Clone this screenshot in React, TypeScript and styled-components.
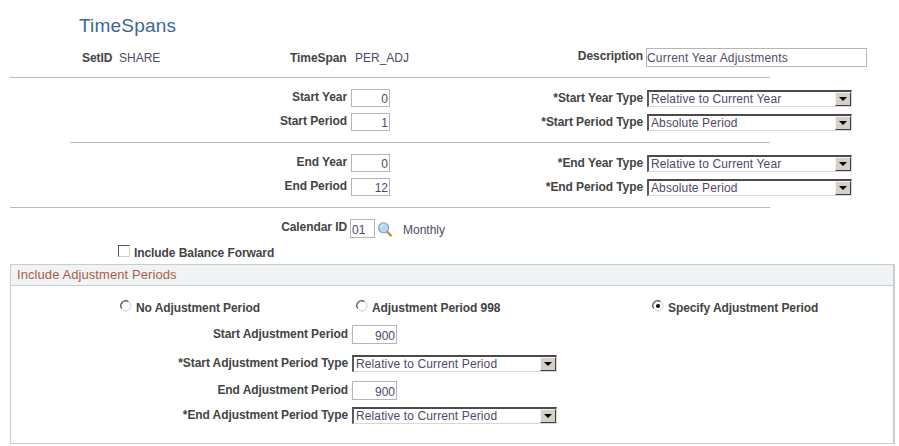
import React from 'react';
import styled, { createGlobalStyle } from 'styled-components';

const GlobalStyle = createGlobalStyle`
  html, body {
    margin: 0;
    padding: 0;
    background: #fff;
    font-family: 'Liberation Sans', Arial, sans-serif;
    font-size: 12px;
  }
`;

const Page = styled.div`
  width: 899px;
  height: 446px;
  overflow: hidden;
  position: relative;
`;

const Title = styled.h1`
  margin: 15px 0 0 79px;
  font-size: 19px;
  letter-spacing: 0.2px;
  line-height: 22px;
  font-weight: normal;
  color: #3d6797;
`;

const HeaderRow = styled.div`
  display: grid;
  grid-template-columns: 37px 171px 54px 216px 83px 224px;
  padding-left: 82px;
  height: 19px;
  margin-top: 11px;
  align-items: start;
`;

const Label = styled.label<{ $top?: number }>`
  display: block;
  font-weight: bold;
  color: #444;
  font-size: 12px;
  letter-spacing: -0.08px;
  line-height: 14px;
  white-space: nowrap;
  margin-top: ${(p) => p.$top ?? 0}px;
`;

const RightLabel = styled(Label)`
  text-align: right;
`;

const Value = styled.span<{ $left?: number }>`
  display: block;
  color: #4f4a68;
  font-size: 12px;
  line-height: 14px;
  white-space: nowrap;
  margin-top: 3px;
  padding-left: ${(p) => p.$left ?? 0}px;
`;

const Rule = styled.hr<{ $indent: number; $top?: number }>`
  border: 0;
  height: 1px;
  background: #b9b9b9;
  margin: ${(p) => p.$top ?? 10}px 129px 11px ${(p) => p.$indent}px;
`;

const FieldRow = styled.div`
  display: grid;
  grid-template-columns: 347px 43px 253px 1fr;
  height: 18px;
  align-items: start;
  & + & {
    margin-top: 6px;
  }
`;

const TextInput = styled.input<{ $width: number; $height?: number; $align?: string; $pad?: number; $spacing?: number }>`
  box-sizing: border-box;
  display: block;
  width: ${(p) => p.$width}px;
  height: ${(p) => p.$height ?? 18}px;
  padding: 2px 1px 0 ${(p) => p.$pad ?? 1}px;
  border: 1px solid #b5b5b5;
  font-family: inherit;
  font-size: 12px;
  letter-spacing: ${(p) => p.$spacing ?? 0}px;
  color: #4f4a68;
  text-align: ${(p) => p.$align ?? 'right'};
  outline: none;
`;

const DescriptionInput = styled(TextInput)`
  padding-top: 0;
`;

const InputCell = styled.div<{ $left: number; $top?: number }>`
  padding-left: ${(p) => p.$left}px;
  padding-top: ${(p) => p.$top ?? 0}px;
`;

const SelectBox = styled.div`
  box-sizing: border-box;
  display: flex;
  width: 205px;
  height: 17px;
  border-top: 2px solid #4a4a4a;
  border-left: 2px solid #5a5a5a;
  border-right: 1px solid #d8d6d0;
  border-bottom: 1px solid #d8d6d0;
  background: #fff;
`;

const SelectText = styled.span`
  flex: 1;
  padding-left: 2px;
  font-size: 12px;
  letter-spacing: 0.12px;
  line-height: 15px;
  color: #4f4a68;
  white-space: nowrap;
`;

const SelectButton = styled.span`
  box-sizing: border-box;
  width: 16px;
  height: 14px;
  background: #d4d0c8;
  border-top: 1px solid #f4f3f0;
  border-left: 1px solid #f4f3f0;
  border-right: 1px solid #404040;
  border-bottom: 1px solid #404040;
  display: flex;
  align-items: center;
  justify-content: center;
  &::after {
    content: '';
    border-left: 4px solid transparent;
    border-right: 4px solid transparent;
    border-top: 4px solid #000;
  }
`;

const CalendarRow = styled.div`
  display: flex;
  align-items: flex-start;
  height: 19px;
`;

const CalendarLabel = styled(RightLabel)`
  width: 347px;
`;

const SearchButton = styled.span`
  display: block;
  width: 14px;
  height: 15px;
  margin: 3px 0 0 3px;
`;

const CalendarValue = styled(Value)`
  margin: 4px 0 0 11px;
`;

const CheckRow = styled.div`
  display: flex;
  align-items: flex-start;
  height: 13px;
  margin: 7px 0 6px 118px;
`;

const CheckBox = styled.span`
  box-sizing: border-box;
  display: block;
  width: 12px;
  height: 12px;
  border-top: 1px solid #555;
  border-left: 1px solid #555;
  border-right: 1px solid #d4d0c8;
  border-bottom: 1px solid #d4d0c8;
  background: #fff;
`;

const CheckLabel = styled(Label)`
  margin: 1px 0 0 4px;
`;

const Section = styled.section`
  box-sizing: border-box;
  margin-left: 10px;
  width: 885px;
  height: 180px;
  border-left: 1px solid #c9ccd4;
  border-right: 2px solid #c9ccd4;
  border-bottom: 1px solid #c9ccd4;
`;

const SectionHeader = styled.div`
  box-sizing: border-box;
  height: 22px;
  margin-right: -2px;
  padding-left: 6px;
  background: #f0f4f5;
  border-top: 1px solid #c9ccd4;
  border-bottom: 1px solid #c9ccd4;
  border-right: 2px solid #c9ccd4;
  color: #a85c48;
  font-size: 13px;
  letter-spacing: 0.08px;
  line-height: 20px;
`;

const RadioRow = styled.div`
  display: grid;
  grid-template-columns: 236px 296px 1fr;
  margin: 14px 0 0 109px;
  height: 16px;
`;

const RadioOption = styled.div`
  display: flex;
  align-items: flex-start;
  gap: 4px;
`;

const AdjustRow = styled.div<{ $top: number }>`
  display: flex;
  align-items: flex-start;
  margin-top: ${(p) => p.$top}px;
`;

const AdjustLabel = styled(RightLabel)`
  width: 337px;
  margin-right: 4px;
`;

const Radio = ({ checked }: { checked?: boolean }) => (
  <svg width="12" height="12" viewBox="0 0 12 12">
    <circle cx="6" cy="6" r="5" fill="#fff" stroke="#d4d0c8" />
    <path d="M1.6 8.5A5 5 0 0 1 8.5 1.6" fill="none" stroke="#555" strokeWidth="1.2" />
    {checked && <circle cx="6" cy="6" r="2" fill="#000" />}
  </svg>
);

const SearchIcon = () => (
  <svg width="14" height="15" viewBox="0 0 14 15">
    <line x1="9" y1="9.5" x2="12.8" y2="13.5" stroke="#c98a3a" strokeWidth="2.4" strokeLinecap="round" />
    <circle cx="5.6" cy="5.8" r="5" fill="#b9d6ee" stroke="#7ba0bf" strokeWidth="1.1" />
    <path d="M2.8 5.4a3 3 0 0 1 2.4-2.4" fill="none" stroke="#fff" strokeWidth="1" />
  </svg>
);

const Select = ({ value }: { value: string }) => (
  <SelectBox>
    <SelectText>{value}</SelectText>
    <SelectButton />
  </SelectBox>
);

const rangeRows = (
  rows: { label: string; value: string; typeLabel: string; type: string }[],
) =>
  rows.map((row) => (
    <FieldRow key={row.label}>
      <RightLabel $top={1}>{row.label}</RightLabel>
      <InputCell $left={4}>
        <TextInput readOnly $width={39} value={row.value} />
      </InputCell>
      <RightLabel $top={2}>{row.typeLabel}</RightLabel>
      <InputCell $left={4} $top={1}>
        <Select value={row.type} />
      </InputCell>
    </FieldRow>
  ));

export default function App() {
  return (
    <Page>
      <GlobalStyle />
      <Title>TimeSpans</Title>
      <HeaderRow>
        <Label $top={3}>SetID</Label>
        <Value>SHARE</Value>
        <RightLabel $top={3}>TimeSpan</RightLabel>
        <Value $left={11}>PER_ADJ</Value>
        <RightLabel $top={1}>Description</RightLabel>
        <InputCell $left={3}>
          <DescriptionInput readOnly $width={221} $height={19} $align="left" $pad={0} $spacing={0.2} value="Current Year Adjustments" />
        </InputCell>
      </HeaderRow>
      <Rule $indent={10} />
      {rangeRows([
        { label: 'Start Year', value: '0', typeLabel: '*Start Year Type', type: 'Relative to Current Year' },
        { label: 'Start Period', value: '1', typeLabel: '*Start Period Type', type: 'Absolute Period' },
      ])}
      <Rule $indent={70} $top={11} />
      {rangeRows([
        { label: 'End Year', value: '0', typeLabel: '*End Year Type', type: 'Relative to Current Year' },
        { label: 'End Period', value: '12', typeLabel: '*End Period Type', type: 'Absolute Period' },
      ])}
      <Rule $indent={10} $top={11} />
      <CalendarRow>
        <CalendarLabel $top={1}>Calendar ID</CalendarLabel>
        <InputCell $left={3}>
          <TextInput readOnly $width={25} $height={19} $align="left" value="01" />
        </InputCell>
        <SearchButton>
          <SearchIcon />
        </SearchButton>
        <CalendarValue>Monthly</CalendarValue>
      </CalendarRow>
      <CheckRow>
        <CheckBox />
        <CheckLabel>Include Balance Forward</CheckLabel>
      </CheckRow>
      <Section>
        <SectionHeader>Include Adjustment Periods</SectionHeader>
        <RadioRow>
          <RadioOption>
            <Radio />
            <Label $top={1}>No Adjustment Period</Label>
          </RadioOption>
          <RadioOption>
            <Radio />
            <Label $top={1}>Adjustment Period 998</Label>
          </RadioOption>
          <RadioOption>
            <Radio checked />
            <Label $top={1}>Specify Adjustment Period</Label>
          </RadioOption>
        </RadioRow>
        <AdjustRow $top={9}>
          <AdjustLabel $top={2}>Start Adjustment Period</AdjustLabel>
          <TextInput readOnly $width={45} $height={19} value="900" />
        </AdjustRow>
        <AdjustRow $top={11}>
          <AdjustLabel $top={1}>*Start Adjustment Period Type</AdjustLabel>
          <Select value="Relative to Current Period" />
        </AdjustRow>
        <AdjustRow $top={9}>
          <AdjustLabel $top={2}>End Adjustment Period</AdjustLabel>
          <TextInput readOnly $width={45} $height={19} value="900" />
        </AdjustRow>
        <AdjustRow $top={7}>
          <AdjustLabel $top={1}>*End Adjustment Period Type</AdjustLabel>
          <Select value="Relative to Current Period" />
        </AdjustRow>
      </Section>
    </Page>
  );
}
